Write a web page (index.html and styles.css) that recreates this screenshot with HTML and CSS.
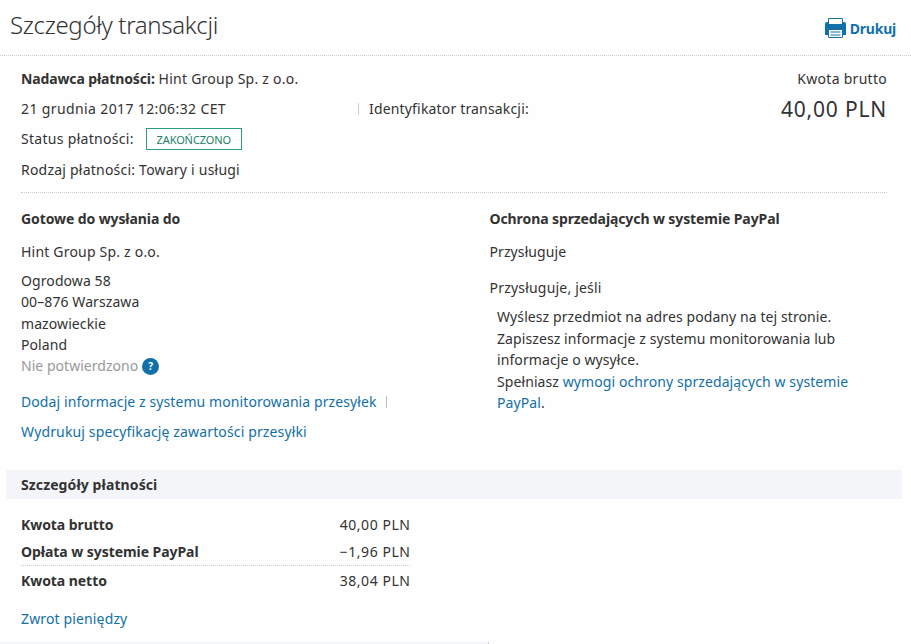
FILE: index.html
```html
<!DOCTYPE html>
<html lang="pl">
<head>
    <meta charset="UTF-8">
    <meta name="viewport" content="width=device-width, initial-scale=1.0">
    <title>Szczegóły transakcji</title>
    <link rel="stylesheet" href="styles.css">
</head>
<body>
    <header class="page-header">
        <h1>Szczegóły transakcji</h1>
        <a class="print-link" href="#">
            <svg class="print-icon" width="21" height="20" viewBox="0 0 21 20">
                <rect x="3.500" y=".5" width="14" height="8" rx=".5" fill="#fff" stroke="#1270a8"/>
                <path d="M2 4H3V6H18V4H19Q21 4 21 6V17H0V6Q0 4 2 4Z" fill="#1270a8"/>
                <rect x="3.500" y="11.500" width="14" height="8" rx=".5" fill="#fff" stroke="#1270a8"/>
                <path d="M5.500 14H15.500M5.500 17H15.500" stroke="#1270a8" stroke-width="1.200"/>
            </svg>
            <span>Drukuj</span>
        </a>
    </header>

    <section class="summary">
        <div class="summary-info">
            <p><strong>Nadawca płatności:</strong> <span class="sender">Hint Group Sp. z o.o.</span></p>
            <div class="summary-row">
                <p class="date">21 grudnia 2017 12:06:32 CET</p>
                <p class="transaction-id">Identyfikator transakcji:</p>
            </div>
            <div class="status-row">
                <p>Status płatności:</p>
                <span class="status">ZAKOŃCZONO</span>
            </div>
            <p class="kind">Rodzaj płatności: Towary i usługi</p>
        </div>
        <div class="summary-amount">
            <p>Kwota brutto</p>
            <p class="amount">40,00 PLN</p>
        </div>
    </section>

    <section class="columns">
        <div class="shipping">
            <h2>Gotowe do wysłania do</h2>
            <p class="name">Hint Group Sp. z o.o.</p>
            <address class="address">
                Ogrodowa 58<br>
                00–876 Warszawa<br>
                mazowieckie<br>
                Poland<br>
                <span class="unconfirmed">Nie potwierdzono <span class="help">?</span></span>
            </address>
            <ul class="links">
                <li><a class="tracking" href="#">Dodaj informacje z systemu monitorowania przesyłek</a></li>
                <li><a class="packing" href="#">Wydrukuj specyfikację zawartości przesyłki</a></li>
            </ul>
        </div>
        <div class="protection">
            <h2>Ochrona sprzedających w systemie PayPal</h2>
            <p class="name">Przysługuje</p>
            <p class="condition">Przysługuje, jeśli</p>
            <ul class="rules">
                <li>Wyślesz przedmiot na adres podany na tej stronie.</li>
                <li>Zapiszesz informacje z systemu monitorowania lub<br>informacje o wysyłce.</li>
                <li>Spełniasz <a href="#">wymogi ochrony sprzedających w systemie<br>PayPal</a>.</li>
            </ul>
        </div>
    </section>

    <h2 class="band">Szczegóły płatności</h2>

    <section class="payment">
        <dl class="totals">
            <div class="total-row"><dt>Kwota brutto</dt><dd>40,00 PLN</dd></div>
            <div class="total-row"><dt>Opłata w systemie PayPal</dt><dd>−1,96 PLN</dd></div>
            <div class="total-row net"><dt>Kwota netto</dt><dd>38,04 PLN</dd></div>
        </dl>
        <a class="refund" href="#">Zwrot pieniędzy</a>
    </section>
    <div class="next-panel"></div>
</body>
</html>
```

FILE: styles.css
```css
* {
    box-sizing: border-box;
}
body {
    margin: 0;
    height: 644px;
    overflow: hidden;
    background: #fefefe;
    color: #333;
    font-family: "Noto Sans", sans-serif;
    font-size: 14px;
    letter-spacing: 0.09px;
    line-height: 30px;
    white-space: nowrap;
}
h1, h2, p, ul, dl, dd {
    margin: 0;
    padding: 0;
}
ul {
    list-style: none;
}
h2 {
    font-size: 14px;
    font-weight: 700;
    letter-spacing: -0.1px;
}
strong {
    letter-spacing: -0.13px;
}
a {
    color: #1270a8;
    text-decoration: none;
}

/* Header */
.page-header {
    display: flex;
    justify-content: space-between;
    height: 56px;
    padding: 0 15px 0 10px;
    border-bottom: 1px dotted #ccc;
}
.page-header h1 {
    font-size: 24px;
    font-weight: 300;
    letter-spacing: -0.33px;
    line-height: 49px;
}
.print-link {
    display: flex;
    align-items: center;
    gap: 4px;
    height: 57px;
    font-weight: 700;
    letter-spacing: -0.2px;
}
.print-icon {
    margin-bottom: 1px;
}

/* Summary */
.summary {
    display: flex;
    justify-content: space-between;
    height: 137px;
    margin: 0 24px 0 21px;
    padding-top: 8px;
    border-bottom: 1px dotted #ccc;
    letter-spacing: 0.24px;
}
.summary-row, .status-row {
    display: flex;
}
.status-row {
    align-items: center;
    gap: 12px;
    letter-spacing: 0.3px;
}
.date {
    width: 337px;
    letter-spacing: 0.38px;
}
.transaction-id {
    display: flex;
    align-items: center;
    gap: 10px;
    letter-spacing: 0.17px;
}
.transaction-id::before {
    content: "";
    width: 1px;
    height: 12px;
    background: #ccc;
}
.status {
    width: 96px;
    height: 22px;
    border: 1px solid #2a9d83;
    color: #1c8069;
    font-size: 11px;
    letter-spacing: -0.1px;
    line-height: 21px;
    text-align: center;
}
.kind {
    padding-top: 1px;
    letter-spacing: 0.22px;
}
.summary-amount {
    letter-spacing: 0.28px;
    text-align: right;
}
.amount {
    font-size: 21px;
    letter-spacing: 0.8px;
}

/* Shipping and seller protection */
.columns {
    display: grid;
    grid-template-columns: 468.500px 1fr;
    height: 277px;
    padding: 10px 0 0 21px;
}
.columns h2 {
    line-height: 32px;
}
.name {
    line-height: 34px;
}
.shipping .name {
    letter-spacing: 0.2px;
}
.address {
    padding-top: 0.7px;
    font-style: normal;
    line-height: 21.400px;
}
.unconfirmed {
    display: flex;
    align-items: center;
    gap: 4px;
    color: #999;
    letter-spacing: 0.03px;
    line-height: 22.400px;
}
.help {
    width: 17px;
    height: 17px;
    border-radius: 50%;
    background: #1270a8;
    color: #fff;
    font-size: 10px;
    font-weight: 700;
    line-height: 17px;
    text-align: center;
}
.links {
    padding-top: 9px;
}
.packing {
    letter-spacing: 0.14px;
}
.tracking::after {
    content: "";
    display: inline-block;
    width: 1px;
    height: 12px;
    margin-left: 9px;
    background: #bbb;
    vertical-align: -1px;
}
.condition {
    letter-spacing: 0.2px;
    line-height: 37px;
}
.rules {
    padding-left: 7.500px;
    line-height: 21.500px;
}

/* Payment details */
.band {
    height: 29px;
    margin: 0 9px 0 6px;
    padding-left: 15px;
    background: #f3f5f9;
    letter-spacing: 0.1px;
    line-height: 29px;
}
.payment {
    height: 143px;
    padding: 12px 0 0 21px;
}
.totals {
    width: 389px;
}
.total-row {
    display: flex;
    justify-content: space-between;
    line-height: 27px;
}
.total-row dt {
    font-weight: 700;
    letter-spacing: -0.06px;
}
.total-row dd {
    margin-right: -0.5px;
    letter-spacing: 0.55px;
}
.net {
    border-top: 1px dotted #ccc;
    line-height: 30px;
}
.refund {
    display: inline-block;
    margin-top: 8px;
    letter-spacing: 0.14px;
}
.next-panel {
    width: 489px;
    height: 2px;
    border-right: 1px solid #ccc;
    background: #f3f5f9;
}
```
